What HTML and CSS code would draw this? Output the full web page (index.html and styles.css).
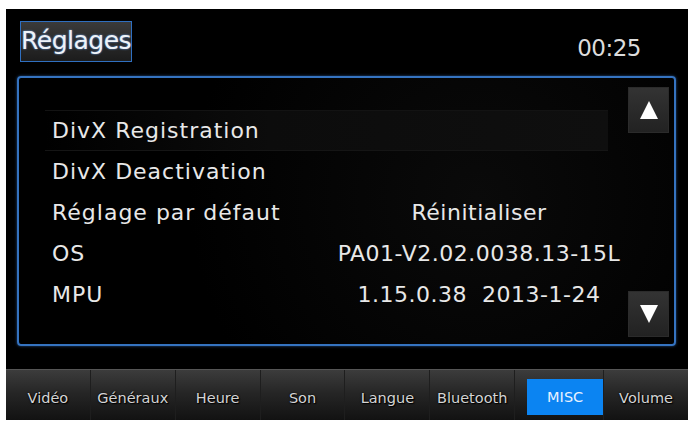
FILE: index.html
```html
<!DOCTYPE html>
<html lang="fr">
<head>
<meta charset="utf-8">
<title>Réglages</title>
<link rel="stylesheet" href="styles.css">
</head>
<body>
<div class="screen">
  <header class="top">
    <div class="title">Réglages</div>
    <div class="clock">00:25</div>
  </header>
  <section class="panel">
    <div class="list">
      <div class="row sel"><span class="label">DivX Registration</span><span class="value"></span></div>
      <div class="row"><span class="label">DivX Deactivation</span><span class="value"></span></div>
      <div class="row"><span class="label">Réglage par défaut</span><span class="value"><span>Réinitialiser</span></span></div>
      <div class="row"><span class="label">OS</span><span class="value"><span>PA01-V2.02.0038.13-15L</span></span></div>
      <div class="row"><span class="label">MPU</span><span class="value"><span>1.15.0.38&nbsp;&nbsp;2013-1-24</span></span></div>
    </div>
    <div class="nav">
      <div class="btn"><svg viewBox="0 0 20 20" width="20" height="20"><polygon points="10,1 19,19 1,19" fill="#fff"/></svg></div>
      <div class="btn"><svg viewBox="0 0 20 20" width="20" height="20"><polygon points="1,1 19,1 10,19" fill="#fff"/></svg></div>
    </div>
  </section>
  <nav class="tabs">
    <div class="tab">Vidéo</div>
    <div class="tab">Généraux</div>
    <div class="tab">Heure</div>
    <div class="tab">Son</div>
    <div class="tab">Langue</div>
    <div class="tab">Bluetooth</div>
    <div class="tab active"><span>MISC</span></div>
    <div class="tab">Volume</div>
  </nav>
</div>
</body>
</html>
```

FILE: styles.css
```css
html, body {
  margin: 0;
  padding: 0;
  background: #ffffff;
}
body {
  font-family: "DejaVu Sans", "Liberation Sans", sans-serif;
}
.screen {
  margin: 9px 0 0 6px;
  width: 682px;
  height: 411px;
  background: #000;
  display: flex;
  flex-direction: column;
  color: #e6e6e6;
}
.top {
  height: 67px;
  display: flex;
  align-items: flex-start;
  justify-content: space-between;
}
.title {
  margin: 12px 0 0 14px;
  width: 112px;
  height: 41px;
  box-sizing: border-box;
  border: 1px solid #2f6fc0;
  background: linear-gradient(#3a3a3a, #1c1c1c);
  font-size: 25px;
  line-height: 37px;
  color: #eef2f6;
  text-shadow: 0 0 2px #6aa8ff;
  white-space: nowrap;
  letter-spacing: -0.5px;
}
.clock {
  margin: 26px 47px 0 0;
  font-size: 23px;
  letter-spacing: -0.5px;
  color: #dcdcdc;
}
.panel {
  margin-left: 11px;
  width: 659px;
  height: 270px;
  box-sizing: border-box;
  border: 2px solid #3573c0;
  border-radius: 4px;
  box-shadow: 0 0 3px rgba(60, 130, 220, 0.6);
  display: flex;
  background: radial-gradient(circle at 70% 45%, #0a0a0a, #000 60%);
}
.list {
  flex: 1;
  padding: 32px 0 0 26px;
  display: flex;
  flex-direction: column;
}
.row {
  width: 563px;
  height: 41px;
  display: flex;
  align-items: center;
  box-sizing: border-box;
  padding-left: 7px;
  font-size: 22px;
  letter-spacing: 1px;
  color: #e8e8e8;
  white-space: nowrap;
}
.row.sel {
  background: linear-gradient(90deg, rgba(0,0,0,0) 0%, #0c0c0c 40%, #0f0f0f 100%);
  border-top: 1px solid #131313;
  border-bottom: 1px solid #151515;
}
.label {
  width: 298px;
  flex-shrink: 0;
}
.value {
  flex: 1;
  min-width: 0;
  display: flex;
  justify-content: center;
  letter-spacing: 0.5px;
}
.nav {
  width: 41px;
  margin-right: 5px;
  padding: 9px 0 7px;
  display: flex;
  flex-direction: column;
  justify-content: space-between;
}
.btn {
  height: 46px;
  background: linear-gradient(#333, #222);
  border: 1px solid #2b2b2b;
  box-sizing: border-box;
  display: flex;
  align-items: center;
  justify-content: center;
}
.tabs {
  margin-top: 23px;
  height: 51px;
  display: flex;
  background: linear-gradient(#3c3c3c, #262626 45%, #121212);
  border-top: 1px solid #555;
  box-sizing: border-box;
}
.tab {
  flex: 1;
  display: flex;
  align-items: center;
  justify-content: center;
  font-size: 14.5px;
  color: #d4d4d4;
  text-shadow: 0 0 2px #000, 1px 1px 1px #000;
  border-right: 1px solid #1e1e1e;
  padding-top: 5px;
  white-space: nowrap;
}
.tab:last-child {
  border-right: none;
}
.tab.active {
  padding: 9px 0 5px;
  align-items: stretch;
}
.tab.active span {
  width: 76px;
  margin-left: 12px;
  background: #0b84f2;
  display: flex;
  align-items: center;
  justify-content: center;
  color: #e8f2ff;
  text-shadow: none;
}
```
